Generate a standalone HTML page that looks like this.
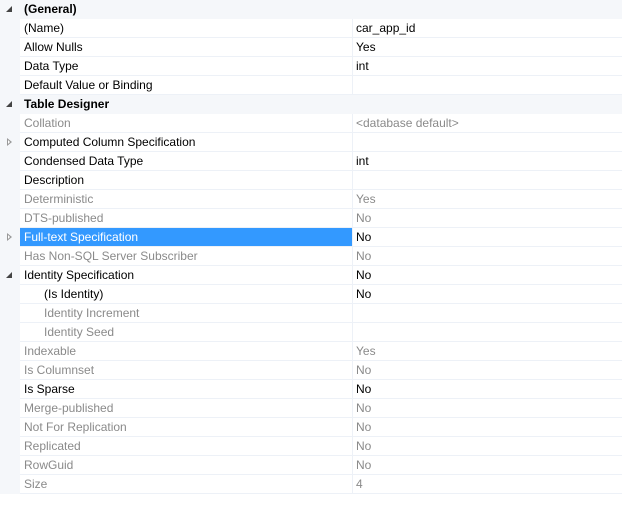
<!DOCTYPE html><html><head><style>
body{margin:0;width:622px;height:526px;background:#fff;font-family:"Liberation Sans",sans-serif;font-size:12px;overflow:hidden;position:relative}
.m{position:absolute;left:0;top:0;width:20px;height:494px;background:#f5f7fa}
.r{position:absolute;left:0;width:622px;height:19px}
.r .l{position:absolute;left:20px;width:332px;height:18px;border-bottom:1px solid #edf1f7;padding-left:4px;box-sizing:border-box;line-height:18px;height:19px}
.r .v{position:absolute;left:352px;width:270px;height:19px;border-left:1px solid #edf1f7;border-bottom:1px solid #edf1f7;box-sizing:border-box;padding-left:3px;line-height:18px}
.c{background:#f5f7fa;font-weight:bold}
.c .l{border:none}
.g{color:#8a8a8a}
.ic{position:absolute;left:6px;top:6px;width:0;height:0}
.ex{border-left:0 solid transparent;border-bottom:6px solid #444;border-left:6px solid transparent}
.co{border-top:4px solid transparent;border-bottom:4px solid transparent;border-left:5px solid #999;top:5px;left:7px}
.co:after{content:"";position:absolute;left:-4px;top:-2px;border-top:2px solid transparent;border-bottom:2px solid transparent;border-left:2px solid #fff}
.sel .l{background:#3399ff;color:#fff}
</style></head><body>
<div class="m"></div>
<div class="r c" style="top:0"><span class="ic ex"></span><div class="l">(General)</div></div>
<div class="r" style="top:19px"><div class="l">(Name)</div><div class="v">car_app_id</div></div>
<div class="r" style="top:38px"><div class="l">Allow Nulls</div><div class="v">Yes</div></div>
<div class="r" style="top:57px"><div class="l">Data Type</div><div class="v">int</div></div>
<div class="r" style="top:76px"><div class="l">Default Value or Binding</div><div class="v"></div></div>
<div class="r c" style="top:95px"><span class="ic ex"></span><div class="l">Table Designer</div></div>
<div class="r g" style="top:114px"><div class="l">Collation</div><div class="v">&lt;database default&gt;</div></div>
<div class="r" style="top:133px"><span class="ic co"></span><div class="l">Computed Column Specification</div><div class="v"></div></div>
<div class="r" style="top:152px"><div class="l">Condensed Data Type</div><div class="v">int</div></div>
<div class="r" style="top:171px"><div class="l">Description</div><div class="v"></div></div>
<div class="r g" style="top:190px"><div class="l">Deterministic</div><div class="v">Yes</div></div>
<div class="r g" style="top:209px"><div class="l">DTS-published</div><div class="v">No</div></div>
<div class="r sel" style="top:228px"><span class="ic co"></span><div class="l">Full-text Specification</div><div class="v">No</div></div>
<div class="r g" style="top:247px"><div class="l">Has Non-SQL Server Subscriber</div><div class="v">No</div></div>
<div class="r" style="top:266px"><span class="ic ex"></span><div class="l">Identity Specification</div><div class="v">No</div></div>
<div class="r" style="top:285px"><div class="l" style="padding-left:24px">(Is Identity)</div><div class="v">No</div></div>
<div class="r g" style="top:304px"><div class="l" style="padding-left:24px">Identity Increment</div><div class="v"></div></div>
<div class="r g" style="top:323px"><div class="l" style="padding-left:24px">Identity Seed</div><div class="v"></div></div>
<div class="r g" style="top:342px"><div class="l">Indexable</div><div class="v">Yes</div></div>
<div class="r g" style="top:361px"><div class="l">Is Columnset</div><div class="v">No</div></div>
<div class="r" style="top:380px"><div class="l">Is Sparse</div><div class="v">No</div></div>
<div class="r g" style="top:399px"><div class="l">Merge-published</div><div class="v">No</div></div>
<div class="r g" style="top:418px"><div class="l">Not For Replication</div><div class="v">No</div></div>
<div class="r g" style="top:437px"><div class="l">Replicated</div><div class="v">No</div></div>
<div class="r g" style="top:456px"><div class="l">RowGuid</div><div class="v">No</div></div>
<div class="r g" style="top:475px"><div class="l">Size</div><div class="v">4</div></div>
</body></html>
